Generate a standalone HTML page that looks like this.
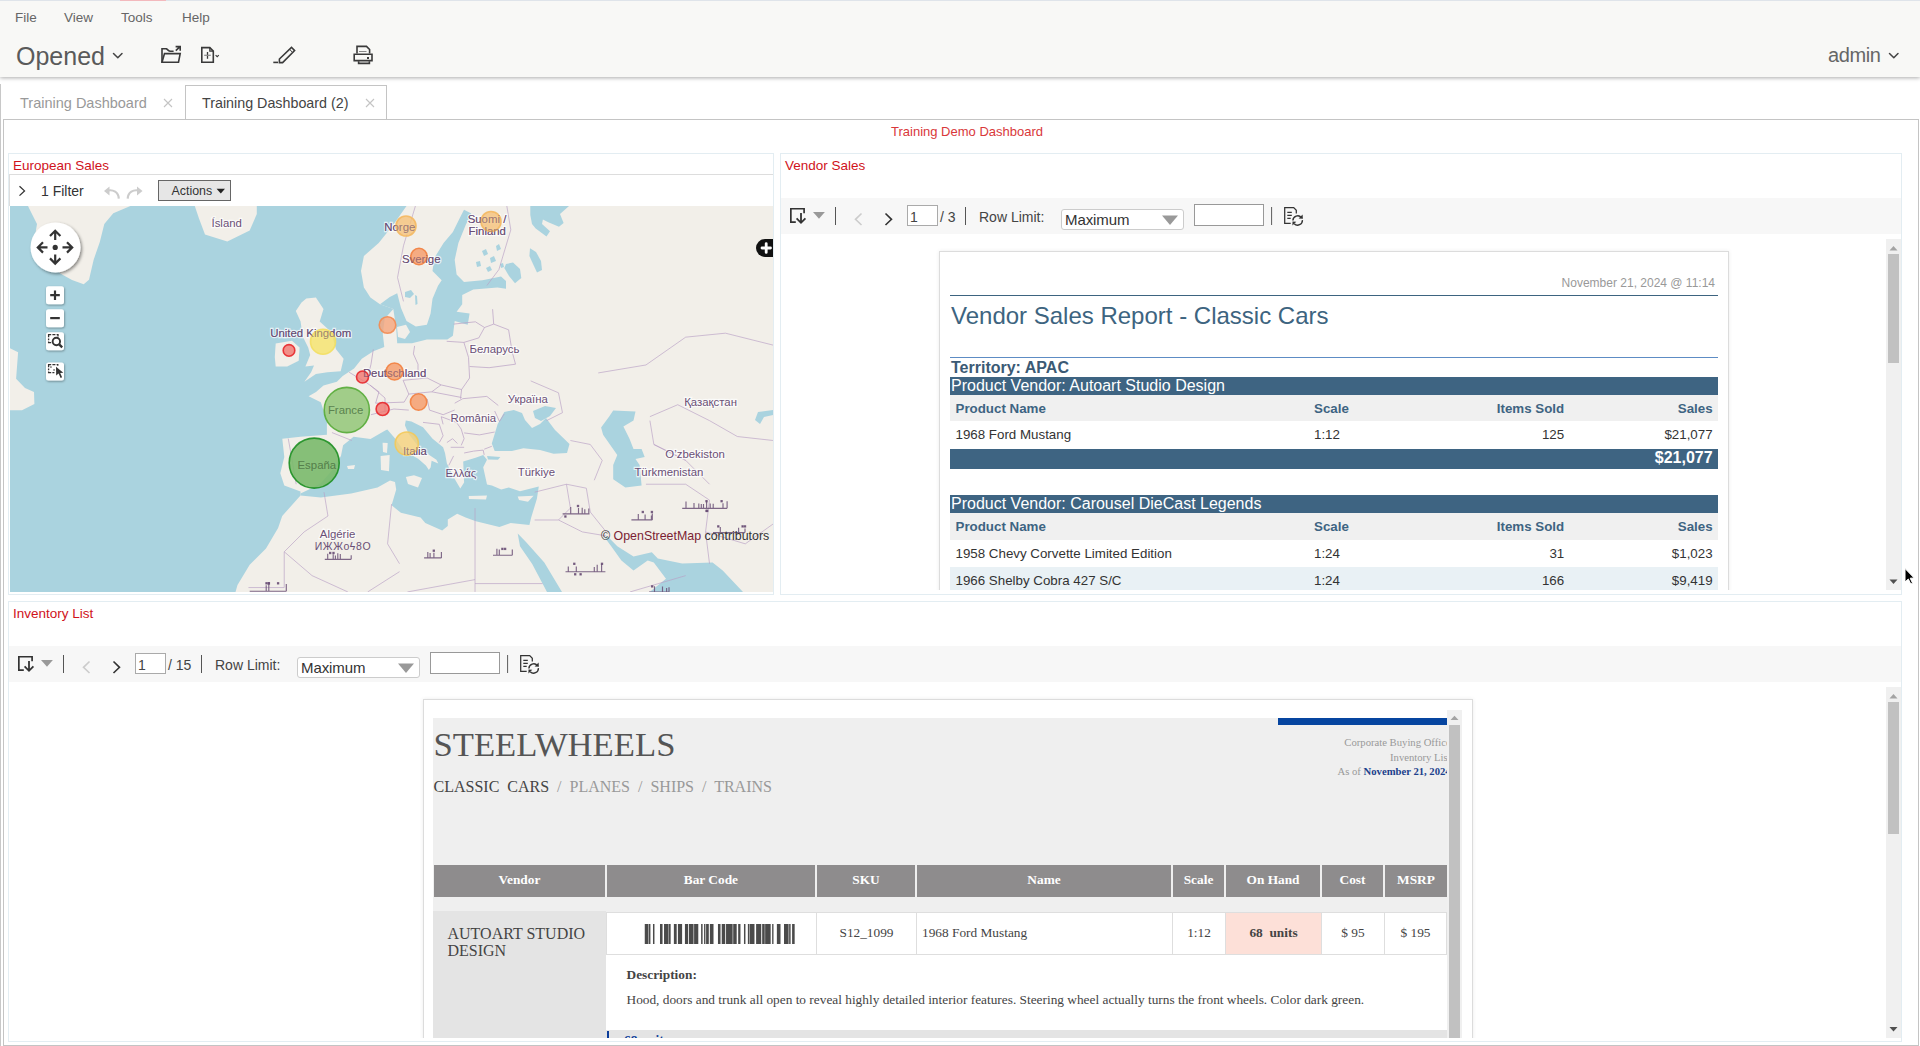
<!DOCTYPE html>
<html><head><meta charset="utf-8">
<style>
*{box-sizing:border-box}
html,body{margin:0;padding:0;width:1920px;height:1046px;overflow:hidden;background:#fff;font-family:"Liberation Sans",sans-serif;color:#333}
.a{position:absolute}
#hdr{left:0;top:0;width:1920px;height:77px;background:#f8f8f6;box-shadow:0 1px 4px rgba(0,0,0,.33)}
#topline{left:0;top:0;width:1920px;height:1px;background:#dfe4ea}
.menu{top:9.5px;font-size:13.5px;color:#666}
.tabtxt{font-size:14px;white-space:nowrap}
.panel{border:1px solid #e3edf2;background:#fff}
.ptitle{font-size:13.5px;color:#d0121b;white-space:nowrap}
.tb{background:#f7f7f7}
.sep{width:1px;height:18px;background:#666}
.pinput{border:1px solid #aaa;background:#fff}
.sel{border:1px solid #ccc;border-radius:3px;background:#fff}
.tri{width:0;height:0;border-left:8px solid transparent;border-right:8px solid transparent;border-top:10px solid #999}
.sb{background:#f0f0f0}
.thumb{background:#c1c1c1}
.serif{font-family:"Liberation Serif",serif;white-space:nowrap}
.ihdr{top:865px;height:31.9px;background:#8e8c8d;color:#fff;font-family:"Liberation Serif",serif;font-weight:bold;font-size:13.33px;line-height:13.33px;text-align:center;padding-top:7.8px;white-space:nowrap}
.icell{top:911.8px;height:43.5px;background:#fff;border:1px solid #dedede;color:#444;font-family:"Liberation Serif",serif;font-size:13.33px;line-height:13.33px;text-align:center;padding-top:12.8px;white-space:nowrap}
.tbt{font-size:14px;line-height:14px;color:#444;white-space:nowrap}
.vbar{left:950px;width:768px;height:17.8px;background:#3e6482;color:#fff;font-size:16px;line-height:16px;white-space:nowrap}
.vbar span{position:absolute;left:1px;top:1px}
.vhdr{left:950px;width:768px;height:25.5px;background:#f0f0f0;color:#3e6482;font-weight:bold;font-size:13.33px;line-height:13.33px;white-space:nowrap}
.vrow{left:950px;width:768px;height:28px;background:#fff;color:#333;font-size:13.33px;line-height:13.33px;white-space:nowrap}
.vhdr span,.vrow span{position:absolute;top:6.6px}
.vrow span{top:7.2px}
.c1{left:5.5px}.c2{left:364px}
.c3{right:153.8px;text-align:right}.c4{right:5.4px;text-align:right}
.vbar .c4{left:auto;right:5.4px}
</style></head><body>
<div id="hdr" class="a"></div>
<div id="topline" class="a"></div>
<div class="a" style="left:120px;top:0;width:46px;height:1px;background:#f3b9bd"></div>
<div class="a menu" style="left:15px">File</div>
<div class="a menu" style="left:64px">View</div>
<div class="a menu" style="left:121px">Tools</div>
<div class="a menu" style="left:182px">Help</div>
<div class="a" style="left:16px;top:42px;font-size:25px;color:#5a5a5a;white-space:nowrap">Opened</div>
<div class="a" style="left:1828px;top:44px;font-size:20px;color:#666;white-space:nowrap;letter-spacing:-0.4px">admin</div>
<svg class="a" style="left:0;top:0" width="1920" height="78" viewBox="0 0 1920 78">
 <g fill="none" stroke="#444" stroke-width="1.5" stroke-linecap="round" stroke-linejoin="round">
  <path d="M113.5 53.5 L117.8 57.8 L122 53.5"/>
  <path d="M1889.5 53.5 L1893.8 57.8 L1898 53.5"/>
 </g>
 <g fill="none" stroke="#3a3a3a" stroke-width="1.6" stroke-linejoin="miter">
  <path d="M162 62.2 V48.8 H166.3 C168 49.5 168.5 51.3 170.3 51.3 H173.6"/>
  <path d="M164.5 53.6 H180.2 L178.5 62.2 H162 Z"/>
  <path d="M175.8 50.6 L180 46.6 M175.6 46.6 H180.2 V50.8"/>
  <path d="M201.8 62.2 V47.6 H209.8 L213.3 51.1 V62.2 Z"/>
  <path d="M209.8 47.6 V51.1 H213.3" stroke-width="1.2"/>
  <path d="M207.5 52 V58.8" stroke-width="1.3"/>
  <path d="M204.2 55.3 H210.8" stroke="#888" stroke-width="1.2"/>
  <path d="M215.6 55.1 L217.2 56.7 L218.8 55.1" stroke-width="1.1"/>
  <path d="M273.3 62.4 H278"/>
  <path d="M279.4 62.6 V59 L291.5 47.3 L294.6 50.6 L282.6 62.6 Z"/>
  <path d="M289.5 49.2 L292.6 52.5" stroke-width="1"/>
  <path d="M357 53.6 V46.4 H366.5 L369.6 49.5 V53.6"/>
  <path d="M359 51.5 H366.5" stroke="#888" stroke-width="1"/>
  <path d="M354.2 54.2 H372 V60.6 H354.2 Z"/>
  <path d="M358.6 61.2 V63.4 H369.4 V61.2"/>
 </g>
 <rect x="367" y="57" width="2" height="2" fill="#3a3a3a"/>
</svg>

<!-- tabs -->
<div class="a" style="left:0;top:84px;width:1px;height:962px;background:#c8c8c8"></div>
<div class="a tabtxt" style="left:20px;top:95px;color:#999;font-size:14.5px">Training Dashboard</div>
<div class="a" style="left:185px;top:85px;width:202px;height:35px;border:1px solid #c4c4c4;border-bottom:none;background:#fff"></div>
<div class="a tabtxt" style="left:202px;top:95px;color:#444;font-size:14.3px">Training Dashboard (2)</div>
<div class="a" style="left:3px;top:119px;width:1916px;height:927px;border:1px solid #c4c4c4;border-bottom:1px solid #c4c4c4;"></div>
<div class="a" style="left:891px;top:124px;font-size:13px;color:#d9383a;white-space:nowrap">Training Demo Dashboard</div>

<!-- panel 1 -->
<div class="a panel" style="left:8px;top:153px;width:766px;height:442px"></div>
<div class="a ptitle" style="left:13px;top:158px">European Sales</div>
<div class="a" style="left:9px;top:174px;width:764px;height:1px;background:#ddd"></div><div class="a" style="left:9px;top:174px;width:1px;height:32px;background:#ddd"></div>
<div class="a" style="left:41px;top:183px;font-size:14px;color:#333">1 Filter</div>
<div class="a" style="left:158px;top:180px;width:73px;height:21px;background:#e6e6e6;border:1px solid #666"></div>
<div class="a" style="left:171.5px;top:184px;font-size:12.4px;line-height:14px;color:#333">Actions</div>
<svg class="a" style="left:10px;top:206px" width="763" height="386" viewBox="0 0 763 386">
<rect width="763" height="386" fill="#aad3df"/>
<g fill="#f2efe9">
<polygon points="396.5,0.0 763.0,0.0 763.0,386.0 225.5,386.0 227.5,379.0 239.7,358.7 256.0,342.4 268.1,322.0 272.2,310.0 290.5,289.5 290.5,285.4 274.3,279.4 270.3,267.2 274.3,251.0 272.3,232.8 290.5,230.7 316.9,228.7 316.9,214.5 310.8,196.3 298.6,190.2 306.0,186.0 313.5,179.6 326.9,175.8 332.7,170.0 344.1,162.4 351.8,152.8 363.3,145.2 374.3,141.0 372.8,128.0 374.7,112.7 383.3,103.1 370.0,98.3 360.4,91.6 355.6,84.0 353.9,81.6 351.0,65.0 353.9,50.0 368.7,37.0 383.5,18.5 396.5,0.0"/>
<polygon points="296.3,92.6 305.9,91.6 313.5,103.1 309.7,115.5 321.2,126.1 326.0,143.3 333.6,152.8 330.7,165.3 317.4,166.2 305.9,168.1 294.4,175.8 301.1,166.2 304.0,159.5 295.4,160.5 300.2,149.0 298.2,141.4 292.5,129.9 290.6,115.5 285.8,105.0 291.5,96.4"/>
<polygon points="265.7,137.5 282.0,134.7 289.6,141.4 288.7,154.7 277.2,160.5 265.7,160.5 264.8,150.9"/>
<polygon points="184.8,0.0 246.8,0.0 246.8,8.1 239.7,24.4 217.3,35.5 195.0,28.4 188.9,12.2"/>
<polygon points="18.0,0.0 120.4,0.0 103.3,7.2 94.3,18.0 89.8,36.0 83.6,53.9 79.0,73.7 73.7,78.2 62.0,74.0 50.3,67.4 35.0,50.0 25.0,30.0 27.0,18.0 20.7,5.4"/>
<polygon points="0.0,142.2 8.1,146.3 6.1,172.7 15.0,182.0 24.0,186.0 24.4,198.0 12.0,204.3 0.0,204.3"/>
</g>
<g fill="#aad3df">
<polygon points="290.5,287.5 300.0,283.0 310.8,277.3 325.0,261.1 331.0,249.7 333.1,239.2 343.6,230.8 360.5,232.9 375.2,224.5 377.3,223.4 385.3,232.7 393.9,245.1 408.2,252.7 415.9,259.4 419.7,265.2 414.0,270.9 420.7,261.3 421.6,254.7 428.3,257.5 426.4,253.7 417.8,248.0 408.2,240.3 398.7,227.9 394.9,219.3 395.8,214.5 401.5,215.5 413.0,221.2 422.6,232.7 433.1,241.3 435.0,247.0 436.9,257.5 444.6,272.8 450.3,282.4 454.1,276.6 453.2,255.6 465.6,251.8 473.2,248.9 477.0,253.7 473.2,261.3 477.0,278.6 481.9,279.6 491.2,283.4 498.8,281.5 510.0,285.2 528.8,280.6 526.9,292.8 521.2,311.5 519.4,319.0 500.6,317.1 489.4,320.9 465.9,315.2 455.6,311.5 447.2,307.7 437.8,313.4 437.8,320.0 432.2,324.6 415.3,317.1 410.6,311.5 390.9,306.8 381.6,299.3 386.2,283.4 385.0,276.0 380.0,274.5 372.0,279.0 367.5,281.4 341.2,287.5 310.8,291.5 290.5,289.5"/>
<polygon points="481.8,237.5 487.6,218.3 494.3,205.9 503.8,204.0 512.0,207.0 515.0,214.0 522.0,222.0 530.0,218.0 536.0,212.0 545.0,224.0 559.5,238.0 557.0,247.0 543.6,247.8 530.0,244.1 513.4,242.2 501.9,245.1 484.7,245.1"/>
<polygon points="477.0,249.9 490.4,251.0 488.0,253.7 478.0,253.5"/>
<polygon points="523.0,205.0 535.0,200.0 546.0,202.0 540.0,210.0 531.0,215.0 525.0,212.0"/>
<polygon points="603.2,204.4 625.5,205.4 623.5,214.5 613.4,220.6 619.5,232.8 623.5,242.9 631.6,242.9 634.7,251.0 625.5,253.0 629.6,259.1 631.6,279.4 615.4,281.4 603.2,273.3 603.2,259.1 607.3,249.0 593.1,228.7 591.1,221.6 599.2,210.5"/>
<polygon points="507.7,327.6 516.0,336.0 534.3,356.4 552.0,386.0 537.0,386.0 522.2,358.0 510.0,340.2"/>
<polygon points="597.2,330.0 607.3,340.2 623.5,350.4 641.8,346.3 647.8,352.4 672.2,357.5 702.6,356.4 712.7,364.6 733.0,386.0 639.7,386.0 656.0,372.7 643.8,356.4 637.7,354.4 623.5,364.6 611.4,354.4 601.2,340.2 595.1,332.1"/>
<polygon points="454.0,3.7 461.4,7.4 455.9,18.5 448.4,37.0 444.7,53.8 446.6,68.6 454.0,76.0 472.5,74.2 491.0,70.5 496.0,75.0 496.0,82.7 487.4,81.6 463.3,83.5 452.2,89.0 452.2,98.3 446.6,105.7 459.6,107.6 457.7,118.7 444.7,115.0 442.9,129.8 437.3,133.5 416.9,133.5 402.0,137.2 387.2,137.2 386.2,122.2 383.3,103.1 370.0,98.3 379.8,90.9 387.2,87.2 391.0,102.0 396.5,115.0 405.8,120.5 416.9,118.7 420.6,107.6 422.5,92.7 428.0,79.7 431.7,74.2 422.5,65.0 424.3,52.0 433.6,37.0 442.9,26.0 450.3,11.0"/>
<polygon points="520.3,0.0 559.0,0.0 550.0,8.1 553.6,17.1 549.0,20.7 538.3,16.2 532.9,13.5 532.0,18.0 540.0,25.2 536.5,30.5 525.7,22.5 522.0,18.0 520.3,9.0"/>
<polygon points="496.0,58.0 503.0,56.6 510.0,63.0 511.3,72.0 505.0,77.3 499.0,70.0 494.3,62.0"/>
<polygon points="520.0,42.2 526.0,46.0 531.0,55.0 532.0,64.0 527.0,66.5 523.0,58.0 519.4,50.0"/>
<polygon points="748.0,206.0 763.0,204.0 763.0,209.0 754.0,211.0 750.0,218.0 745.0,214.0"/>
<polygon points="395.0,86.0 401.0,84.0 404.0,88.0 400.0,92.0 395.0,91.0"/>
<polygon points="405.0,89.0 407.0,90.0 407.5,98.0 405.5,99.0"/>
<polygon points="472.0,45.0 476.0,43.0 478.0,48.0 474.0,50.0"/>
<polygon points="480.0,52.0 484.0,50.0 486.0,55.0 481.0,57.0"/>
<polygon points="466.0,56.0 470.0,55.0 471.0,60.0 467.0,61.0"/>
<polygon points="486.0,40.0 489.0,38.0 491.0,43.0 487.0,45.0"/>
<polygon points="476.0,62.0 480.0,60.0 482.0,64.0 478.0,66.0"/>
<polygon points="490.0,58.0 493.0,57.0 494.0,61.0 491.0,62.0"/>
</g>
<g fill="#f2efe9">
<polygon points="395.9,271.0 404.0,269.2 412.0,272.0 408.0,281.4 398.0,278.0"/>
<polygon points="370.6,250.0 379.7,249.0 379.0,265.2 371.0,264.0"/>
<polygon points="372.6,236.8 377.7,237.0 377.0,247.0 373.0,246.0"/>
<polygon points="458.7,290.0 477.0,289.5 476.0,293.6 459.0,293.0"/>
<polygon points="507.7,290.5 523.6,289.7 518.0,295.7 509.0,294.0"/>
<polygon points="337.0,260.0 345.0,259.0 344.0,263.0 338.0,263.0"/>
<polygon points="387.0,121.0 396.0,118.7 400.0,126.0 395.0,133.0 388.0,131.0"/>
</g>
</svg>
<svg class="a" style="left:10px;top:206px" width="763" height="386" viewBox="10 206 763 386">
<g fill="none" stroke="#b9a0c4" stroke-width="2.2" stroke-opacity="0.75" transform="translate(10 206) scale(0.39746)">
<polyline points="1020,0 990,100 975,180 990,240"/>
<polyline points="1250,0 1260,60 1230,160 1200,200"/>
<polyline points="1310,440 1380,470 1390,520 1350,540"/>
<polyline points="810,570 860,590"/>
<polyline points="700,585 710,640 720,700"/>
<polyline points="1410,590 1460,600 1490,640 1470,690"/>
<polyline points="1320,720 1400,700 1450,710"/>
<polyline points="1400,700 1410,760 1380,790"/>
<polyline points="1450,710 1460,770 1500,820"/>
<polyline points="1380,790 1440,820 1500,830"/>
<polyline points="1320,790 1380,790"/>
<polyline points="1170,760 1170,971"/>
<polyline points="1170,950 1340,950"/>
<polyline points="960,750 950,850 980,900"/>
<polyline points="790,720 800,780 740,820 690,870"/>
<polyline points="690,870 760,930 850,971"/>
<polyline points="900,971 980,920"/>
<polyline points="600,960 690,960 690,870"/>
<polyline points="1000,971 1170,940"/>
<polyline points="1480,420 1600,400 1700,330 1800,320 1920,350"/>
<polyline points="1610,530 1680,500 1760,540 1830,580 1920,590"/>
<polyline points="1610,540 1620,600 1700,640"/>
<polyline points="1600,700 1700,700 1760,740"/>
<polyline points="1620,600 1700,640 1760,700"/>
<polyline points="1760,740 1750,820 1850,850 1920,800"/>
<polyline points="1750,820 1760,900"/>
<polyline points="1560,971 1700,930"/>
</g>
<g fill="none" stroke="#b9a0c4" stroke-width="0.9" stroke-opacity="0.8">
<polyline points="414.6,345.9 413.4,353.9 418,364.2 418,373.4 427.2,378 441,384.9 461.6,389.5"/>
<polyline points="446.7,341.3 463.9,342.4 468.5,357.4 469.6,378 461.6,389.5 460.5,398.7"/>
<polyline points="453.6,324.1 475.4,321.8 484.5,327.5"/>
<polyline points="463.9,342.4 478.8,337.9 484.5,327.5"/>
<polyline points="484.5,327.5 493.7,324.1 492.6,309.2"/>
<polyline points="493.7,324.1 508.6,329.8 512.1,351.6 515.5,364.2"/>
<polyline points="469.6,366.5 489.1,367.7 515.5,364.2"/>
<polyline points="373.3,349.3 371,364.2 368.7,373.4 366.4,382.6 379,391.8 375.6,403.2"/>
<polyline points="349.2,372.3 366.4,382.6"/>
<polyline points="375.6,403.2 404.2,402.1 408.8,394.1 403.1,380.3 427.2,378"/>
<polyline points="408.8,394.1 431.8,391.8 441,384.9"/>
<polyline points="431.8,391.8 461.6,397.5"/>
<polyline points="427.2,399 429.5,410.1"/>
<polyline points="371,414.7 393.9,409 408.8,410.1"/>
<polyline points="454.7,403.2 462.7,398.7 486.8,396.4 498.3,405.5"/>
<polyline points="429.5,410.1 443.2,414.7 454.7,410"/>
<polyline points="423,422.4 439.3,424.3 443.1,435.8 439.3,442.5"/>
<polyline points="443.1,424.3 441.2,416.7 456.5,422.4 461.2,429.1 464.1,438.7 461.2,445.4"/>
<polyline points="464.1,432.9 479.4,434.9 494.7,432"/>
<polyline points="464.1,453 473.7,451.1 483.2,450.1 484.2,454.9"/>
<polyline points="450.7,447.3 464.1,447.3"/>
<polyline points="453.6,455.9 448.8,465.4"/>
<polyline points="446.9,442.5 452.6,438.7 457.4,443.5"/>
<polyline points="484.2,449.2 491.8,446.3"/>
<polyline points="494.7,411 499.5,421.5 504.3,413.8"/>
<polyline points="370,385 385,398 385,412"/>
</g>
<g font-family="Liberation Sans" font-size="11.4" fill="#6a4f76" stroke="#fff" stroke-width="2.4" stroke-opacity="0.7" paint-order="stroke">
<text x="211.5" y="227">Ísland</text>
<text x="384.3" y="231">Norge</text>
<text x="401.9" y="262.6">Sverige</text>
<text x="467.7" y="222.7">Suomi /</text>
<text x="468.6" y="234.7">Finland</text>
<text x="270.2" y="336.7">United Kingdom</text>
<text x="362.9" y="376.6">Deutschland</text>
<text x="469.6" y="353.4">Беларусь</text>
<text x="327.9" y="414.4">France</text>
<text x="297.5" y="469.2">España</text>
<text x="402.9" y="455">Italia</text>
<text x="450.5" y="421.5">România</text>
<text x="445.4" y="477.3">Ελλάς</text>
<text x="507.7" y="403">Україна</text>
<text x="517.7" y="475.8">Türkiye</text>
<text x="684.2" y="406">Қазақстан</text>
<text x="665.3" y="457.8">O’zbekiston</text>
<text x="634.4" y="475.8">Türkmenistan</text>
<text x="319.8" y="538.3">Algérie</text>
</g>
<g fill="#6a4f76" stroke="#6a4f76" stroke-width="1.15" stroke-opacity="0.85" fill-opacity="0.85">
<path d="M324.8 559.3 H351.2 M327.7 559.3 V553.8 M333.2 559.3 V554.2 M335.4 559.3 V555.5 M337.8 559.3 V553.3 M340.3 559.3 V553.9 M351.2 559.3 V555.3"/><rect x="332.9" y="552.4" width="1.2" height="1.2"/><rect x="329.6" y="552.4" width="1.2" height="1.2"/>
<path d="M424.1 557.9 H441.4 M427.8 557.9 V552.0 M430.1 557.9 V553.1 M433.9 557.9 V552.8 M441.4 557.9 V551.9"/><rect x="433.2" y="550.1" width="1.2" height="1.2"/>
<path d="M493.0 555.2 H512.3 M496.9 555.2 V548.8 M499.3 555.2 V549.4 M512.3 555.2 V549.6"/><rect x="504.5" y="548.3" width="1.2" height="1.2"/><rect x="501.8" y="548.3" width="1.2" height="1.2"/>
<path d="M562.6 513.9 H589.5 M570.7 513.9 V506.9 M578.5 513.9 V508.0 M582.2 513.9 V507.8 M584.8 513.9 V509.2 M588.8 513.9 V508.5"/><rect x="564.8" y="515.9" width="1.2" height="1.2"/><rect x="577.4" y="505.4" width="1.2" height="1.2"/>
<path d="M631.4 519.9 H652.3 M638.3 519.9 V514.1 M645.1 519.9 V514.6 M651.4 519.9 V515.4 M652.3 519.9 V513.4"/><rect x="651.3" y="511.4" width="1.2" height="1.2"/><rect x="642.2" y="511.4" width="1.2" height="1.2"/>
<path d="M682.2 508.3 H727.1 M686.0 508.3 V501.4 M694.0 508.3 V503.0 M698.8 508.3 V503.6 M701.3 508.3 V504.1 M703.5 508.3 V503.9 M706.6 508.3 V501.5 M710.2 508.3 V503.4 M713.2 508.3 V503.8 M723.0 508.3 V503.2 M727.1 508.3 V501.2"/><rect x="705.9" y="510.3" width="1.2" height="1.2"/><rect x="706.6" y="510.3" width="1.2" height="1.2"/><rect x="705.9" y="500.6" width="1.2" height="1.2"/><rect x="721.0" y="500.6" width="1.2" height="1.2"/>
<path d="M565.5 571.7 H605.4 M568.3 571.7 V566.6 M576.3 571.7 V566.4 M594.3 571.7 V567.1 M597.2 571.7 V564.8 M601.6 571.7 V563.9"/><rect x="580.0" y="573.7" width="1.2" height="1.2"/><rect x="574.6" y="573.7" width="1.2" height="1.2"/><rect x="573.7" y="563.2" width="1.2" height="1.2"/><rect x="601.4" y="563.2" width="1.2" height="1.2"/>
<path d="M713.0 532.6 H745.0 M720.3 532.6 V527.1 M738.6 532.6 V527.8 M745.0 532.6 V528.5"/><rect x="742.0" y="525.8" width="1.2" height="1.2"/><rect x="717.7" y="525.8" width="1.2" height="1.2"/><rect x="744.4" y="525.8" width="1.2" height="1.2"/>
<path d="M649.0 592.1 H669.0 M654.5 592.1 V586.2 M662.5 592.1 V586.5 M666.6 592.1 V588.1 M669.0 592.1 V587.2"/><rect x="654.2" y="594.1" width="1.2" height="1.2"/><rect x="651.6" y="585.8" width="1.2" height="1.2"/>
<path d="M249.7 591.2 H286.3 M266.2 591.2 V585.2 M268.8 591.2 V583.9 M286.3 591.2 V584.0"/><rect x="268.3" y="582.7" width="1.2" height="1.2"/><rect x="277.5" y="582.7" width="1.2" height="1.2"/><rect x="265.9" y="582.7" width="1.2" height="1.2"/><rect x="268.2" y="582.7" width="1.2" height="1.2"/>
</g>
<text x="314.7" y="549.5" font-family="Liberation Sans" font-size="10.5" fill="#6a4f76" letter-spacing="0.6">ИЖЖoϟ8O</text>
<circle cx="289" cy="350.4" r="5.8" fill="#f0776f" fill-opacity="0.8" stroke="#e8262a" stroke-width="1.6" stroke-opacity="0.9"/>
<circle cx="323" cy="341.7" r="12.5" fill="#f5e36a" fill-opacity="0.8" stroke="#f3df62" stroke-width="1.6" stroke-opacity="0.9"/>
<circle cx="387.5" cy="325" r="8.3" fill="#f5a57c" fill-opacity="0.8" stroke="#f28b52" stroke-width="1.6" stroke-opacity="0.9"/>
<circle cx="362.5" cy="377" r="6" fill="#f0776f" fill-opacity="0.8" stroke="#e8262a" stroke-width="1.6" stroke-opacity="0.9"/>
<circle cx="394.5" cy="371.5" r="8.5" fill="#f59a68" fill-opacity="0.8" stroke="#f2803f" stroke-width="1.6" stroke-opacity="0.9"/>
<circle cx="346.8" cy="410" r="22.6" fill="#98c97e" fill-opacity="0.9" stroke="#56ab37" stroke-width="1.6" stroke-opacity="0.9"/>
<circle cx="314.2" cy="463.1" r="25" fill="#7ab96b" fill-opacity="0.9" stroke="#1d8f22" stroke-width="1.6" stroke-opacity="0.9"/>
<circle cx="382.6" cy="409" r="6.5" fill="#f0776f" fill-opacity="0.8" stroke="#e8262a" stroke-width="1.6" stroke-opacity="0.9"/>
<circle cx="418.6" cy="402" r="8.2" fill="#f59a68" fill-opacity="0.8" stroke="#f2803f" stroke-width="1.6" stroke-opacity="0.9"/>
<circle cx="406.8" cy="443.6" r="11.6" fill="#f5d27c" fill-opacity="0.8" stroke="#f3c95a" stroke-width="1.6" stroke-opacity="0.9"/>
<circle cx="406" cy="226" r="10" fill="#f5c27a" fill-opacity="0.8" stroke="#f4b860" stroke-width="1.6" stroke-opacity="0.9"/>
<circle cx="419" cy="256.5" r="8.2" fill="#f59a68" fill-opacity="0.8" stroke="#f2803f" stroke-width="1.6" stroke-opacity="0.9"/>
<circle cx="491" cy="221.5" r="10" fill="#f5c27a" fill-opacity="0.8" stroke="#f4b860" stroke-width="1.6" stroke-opacity="0.9"/>
<g font-family="Liberation Sans" font-size="11.4" fill="#6a4f76" fill-opacity="0.55">
<text x="384.3" y="231">Norge</text>
<text x="401.9" y="262.6">Sverige</text>
<text x="467.7" y="222.7">Suomi /</text>
<text x="468.6" y="234.7">Finland</text>
<text x="270.2" y="336.7">United Kingdom</text>
<text x="362.9" y="376.6">Deutschland</text>
<text x="402.9" y="455">Italia</text>
</g>
<g font-family="Liberation Sans" font-size="11.4" fill="#4a7040" fill-opacity="0.75"><text x="327.9" y="414.4">France</text><text x="297.5" y="469.2">España</text></g>
<text x="601" y="539.5" font-family="Liberation Sans" font-size="12.4" fill="#333">© <tspan fill="#7b1e33">OpenStreetMap</tspan> contributors</text>
<defs><filter id="sh" x="-30%" y="-30%" width="160%" height="160%"><feDropShadow dx="1.5" dy="1.5" stdDeviation="1.5" flood-color="#000" flood-opacity="0.45"/></filter><filter id="sh2" x="-30%" y="-30%" width="160%" height="160%"><feDropShadow dx="0.5" dy="1" stdDeviation="0.8" flood-color="#000" flood-opacity="0.4"/></filter></defs>
<circle cx="55.5" cy="247.4" r="25" fill="#fff" filter="url(#sh)"/>
<g fill="none" stroke="#333" stroke-width="2.2" stroke-linejoin="miter"><path d="M55.2 240 V231.5 M50 236 L55.2 230.8 L60.4 236"/><path d="M55.2 254.6 V262.8 M50 258.4 L55.2 263.6 L60.4 258.4"/><path d="M47.5 247.4 H38.8 M43 242.2 L37.8 247.4 L43 252.6"/><path d="M62.5 247.4 H71.2 M67 242.2 L72.2 247.4 L67 252.6"/></g><circle cx="55.2" cy="247.4" r="2.6" fill="#333"/>
<rect x="46" y="286.2" width="18" height="18" rx="2.5" fill="#fff" filter="url(#sh2)"/>
<rect x="46" y="309.3" width="18" height="18" rx="2.5" fill="#fff" filter="url(#sh2)"/>
<rect x="46" y="332.2" width="18" height="18" rx="2.5" fill="#fff" filter="url(#sh2)"/>
<rect x="46" y="362.4" width="18" height="18" rx="2.5" fill="#fff" filter="url(#sh2)"/>
<path d="M50.2 295.2 H59.8 M55 290.4 V300" stroke="#333" stroke-width="2.2"/>
<path d="M50.2 318.1 H59.8" stroke="#333" stroke-width="2.2"/>
<g fill="none" stroke="#333" stroke-width="1.3"><path d="M48.6 337.2 V334.6 H51.2 M52.4 334.6 H55.4 M56.6 334.6 H58 V336.4 M48.6 338.4 V340.2 M48.6 341.4 V342.6 H51.2"/><circle cx="56.35" cy="341.5" r="3.7" stroke-width="1.9"/><path d="M59.2 344.4 L62.2 347.4" stroke-width="2.3"/></g>
<g fill="none" stroke="#333" stroke-width="1.3"><path d="M48.6 367.2 V364.6 H51.2 M52.4 364.6 H55.4 M56.6 364.6 H57.8 V365.8 M48.6 368.4 V370.2 M48.6 371.4 V372.6 H51.2 M52.4 372.6 H54.4"/></g><rect x="50.3" y="366.4" width="1.3" height="1.3" fill="#333"/><rect x="53.4" y="369.3" width="1.3" height="1.3" fill="#333"/>
<path d="M56 366.8 L56.2 375.6 L58.6 373.5 L60.6 378 L62.1 377.3 L60.2 372.9 L63.3 372.7 Z" fill="#333"/>
<rect x="756" y="239" width="26" height="18" rx="9" fill="#111"/><path d="M762 248 H770.5 M766.2 243.6 V252.4" stroke="#fff" stroke-width="2.8" stroke-linecap="round"/>
</svg>

<!-- panel 2 -->
<div class="a panel" style="left:780px;top:153px;width:1122px;height:442px"></div>
<div class="a ptitle" style="left:785px;top:158px">Vendor Sales</div>
<div class="a tb" style="left:781px;top:198px;width:1120px;height:36px"></div>
<svg class="a" style="left:780px;top:198px" width="540" height="36" viewBox="0 0 540 36">
<g fill="none" stroke="#333" stroke-width="1.7"><path d="M24.1 15.2 V10.75 H10.85 V24.05 H15.8"/><path d="M21 15 V24.6 M16.6 20.4 L21 24.8 L25.4 20.4" stroke-width="1.8"/></g>
<path d="M33 13.9 H44.9 L39 20.8 Z" fill="#999"/>
<rect x="55" y="9" width="1" height="18" fill="#555"/>
<path d="M81.5 15.5 L75.5 21.3 L81.5 27" fill="none" stroke="#ccc" stroke-width="1.6"/>
<path d="M105.5 15.5 L111.5 21.3 L105.5 27" fill="none" stroke="#333" stroke-width="1.6"/>
<rect x="185" y="9" width="1" height="18" fill="#555"/>
<rect x="491" y="9" width="1.1" height="18" fill="#6a6a6a"/>
<g transform="translate(503 0)"><g fill="none" stroke="#333" stroke-width="1.25"><path d="M7.7 25.4 H1.7 V9.6 H10.7 L13.3 12.3 V15.6"/><path d="M4.3 14.4 H8.8 M4.3 17.45 H8.8 M4.3 20.35 H7.7" stroke-width="1.3"/><path d="M9.9 22.6 A4.8 4.8 0 0 1 18.4 19.6 M19.4 22.1 A4.8 4.8 0 0 1 11.2 25.7" stroke-width="1.4"/></g><path d="M15.6 20.4 L19.6 16.6 L19.9 20.8 Z M9.4 27.6 L9.5 23.6 L13.3 23.8 Z" fill="#333"/></g>
</svg>
<div class="a pinput" style="left:907px;top:205px;width:31px;height:21px"></div>
<div class="a tbt" style="left:910px;top:210px">1</div>
<div class="a tbt" style="left:940px;top:210px">/ 3</div>
<div class="a tbt" style="left:979px;top:210px">Row Limit:</div>
<div class="a sel" style="left:1061px;top:209px;width:123px;height:21px"></div>
<div class="a" style="left:1065px;top:211.5px;font-size:15px;line-height:15px;color:#333;letter-spacing:-0.1px">Maximum</div>
<svg class="a" style="left:1160px;top:213px" width="20" height="14"><path d="M2 2.4 H18 L10 12 Z" fill="#999"/></svg>
<div class="a pinput" style="left:1194px;top:204px;width:70px;height:22px;border-color:#999"></div>
<!-- vendor report viewport -->
<div class="a" style="left:781px;top:234px;width:1105px;height:356px;overflow:hidden;background:#fff">
 <div class="a" style="left:-781px;top:-234px;width:1920px;height:1046px">
  <div class="a" style="left:939px;top:251px;width:790px;height:420px;border:1px solid #dcdcdc;box-shadow:0 0 4px rgba(0,0,0,.08)"></div>
  <div class="a" style="left:1500px;top:277.2px;width:215px;text-align:right;font-size:12px;line-height:12px;color:#999">November 21, 2024 @ 11:14</div>
  <div class="a" style="left:950px;top:295px;width:768px;height:1px;background:#3d6480"></div>
  <div class="a" style="left:951px;top:303.5px;font-size:24px;line-height:24px;color:#3d6480;white-space:nowrap">Vendor Sales Report - Classic Cars</div>
  <div class="a" style="left:950px;top:357px;width:768px;height:1px;background:#5d8cc4"></div>
  <div class="a" style="left:951px;top:360.3px;font-size:16px;line-height:16px;font-weight:bold;color:#3b5a75;white-space:nowrap">Territory: APAC</div>
  <div class="a vbar" style="top:377px"><span style="top:1.2px">Product Vendor: Autoart Studio Design</span></div>
  <div class="a vhdr" style="top:395px"><span class="c1">Product Name</span><span class="c2">Scale</span><span class="c3">Items Sold</span><span class="c4">Sales</span></div>
  <div class="a vrow" style="top:420.5px"><span class="c1">1968 Ford Mustang</span><span class="c2">1:12</span><span class="c3">125</span><span class="c4">$21,077</span></div>
  <div class="a vbar" style="top:448.5px;height:20.3px"><span class="c4" style="font-weight:bold;top:1.5px">$21,077</span></div>
  <div class="a vbar" style="top:495px"><span>Product Vendor: Carousel DieCast Legends</span></div>
  <div class="a vhdr" style="top:513px;height:27px"><span class="c1">Product Name</span><span class="c2">Scale</span><span class="c3">Items Sold</span><span class="c4">Sales</span></div>
  <div class="a vrow" style="top:540px"><span class="c1">1958 Chevy Corvette Limited Edition</span><span class="c2">1:24</span><span class="c3">31</span><span class="c4">$1,023</span></div>
  <div class="a vrow" style="top:567.3px;background:#e9f1f5"><span class="c1">1966 Shelby Cobra 427 S/C</span><span class="c2">1:24</span><span class="c3">166</span><span class="c4">$9,419</span></div>
 </div>
</div>
<div class="a sb" style="left:1886px;top:239px;width:15px;height:351px"></div>
<div class="a thumb" style="left:1888px;top:254px;width:11px;height:109px"></div>
<svg class="a" style="left:1886px;top:239px" width="15" height="351"><path d="M3.5 11.5 H11.5 L7.5 7 Z" fill="#a3a3a3"/><path d="M3.5 340.5 H11.5 L7.5 345 Z" fill="#505050"/></svg>

<!-- panel 3 -->
<div class="a panel" style="left:8px;top:601px;width:1894px;height:441px"></div>
<div class="a ptitle" style="left:13px;top:606px">Inventory List</div>
<div class="a tb" style="left:9px;top:646px;width:1892px;height:36px"></div>
<svg class="a" style="left:8px;top:646px" width="540" height="36" viewBox="0 0 540 36">
<g fill="none" stroke="#333" stroke-width="1.7"><path d="M24.1 15.2 V10.75 H10.85 V24.05 H15.8"/><path d="M21 15 V24.6 M16.6 20.4 L21 24.8 L25.4 20.4" stroke-width="1.8"/></g>
<path d="M33 13.9 H44.9 L39 20.8 Z" fill="#999"/>
<rect x="55" y="9" width="1" height="18" fill="#555"/>
<path d="M81.5 15.5 L75.5 21.3 L81.5 27" fill="none" stroke="#ccc" stroke-width="1.6"/>
<path d="M105.5 15.5 L111.5 21.3 L105.5 27" fill="none" stroke="#333" stroke-width="1.6"/>
<rect x="193" y="9" width="1" height="18" fill="#555"/>
<rect x="499" y="9" width="1.1" height="18" fill="#6a6a6a"/>
<g transform="translate(511 0)"><g fill="none" stroke="#333" stroke-width="1.25"><path d="M7.7 25.4 H1.7 V9.6 H10.7 L13.3 12.3 V15.6"/><path d="M4.3 14.4 H8.8 M4.3 17.45 H8.8 M4.3 20.35 H7.7" stroke-width="1.3"/><path d="M9.9 22.6 A4.8 4.8 0 0 1 18.4 19.6 M19.4 22.1 A4.8 4.8 0 0 1 11.2 25.7" stroke-width="1.4"/></g><path d="M15.6 20.4 L19.6 16.6 L19.9 20.8 Z M9.4 27.6 L9.5 23.6 L13.3 23.8 Z" fill="#333"/></g>
</svg>
<div class="a pinput" style="left:135px;top:653px;width:31px;height:21px"></div>
<div class="a tbt" style="left:138px;top:658px">1</div>
<div class="a tbt" style="left:168px;top:658px">/ 15</div>
<div class="a tbt" style="left:215px;top:658px">Row Limit:</div>
<div class="a sel" style="left:297px;top:657px;width:123px;height:21px"></div>
<div class="a" style="left:301px;top:659.5px;font-size:15px;line-height:15px;color:#333;letter-spacing:-0.1px">Maximum</div>
<svg class="a" style="left:396px;top:661px" width="20" height="14"><path d="M2 2.4 H18 L10 12 Z" fill="#999"/></svg>
<div class="a pinput" style="left:430px;top:652px;width:70px;height:22px;border-color:#999"></div>
<!-- inventory viewport -->
<div class="a" style="left:9px;top:682px;width:1877px;height:355.6px;overflow:hidden;background:#fff">
 <div class="a" style="left:-9px;top:-682px;width:1920px;height:1046px">
  <div class="a" style="left:422.5px;top:699.4px;width:1050px;height:400px;border:1px solid #dcdcdc;box-shadow:0 0 4px rgba(0,0,0,.08)"></div>
  <div class="a" style="left:433.4px;top:717.8px;width:1013.6px;height:400px;background:#efefef"></div>
  <div class="a" style="left:1278px;top:717.8px;width:169px;height:7.2px;background:#0645a0"></div>
  <div class="a serif" style="left:433.5px;top:727px;font-size:34.67px;line-height:34.67px;color:#555">STEELWHEELS</div>
  <div class="a serif" style="left:433.5px;top:778.9px;font-size:16px;line-height:16px;color:#999;white-space:pre"><span style="color:#444">CLASSIC  CARS</span>  /  PLANES  /  SHIPS  /  TRAINS</div>
  <div class="a" style="left:1200px;top:730px;width:247px;height:60px;overflow:hidden">
   <div class="a serif" style="right:-3.7px;top:4.6px;text-align:right;font-size:10.67px;line-height:14.9px;color:#999;white-space:nowrap">Corporate Buying Office<br>Inventory List<br>As of <b style="color:#1c3f8c">November 21, 2024</b></div>
  </div>
  <div class="a ihdr" style="left:434px;width:170.9px">Vendor</div>
  <div class="a ihdr" style="left:606.8px;width:208.2px">Bar Code</div>
  <div class="a ihdr" style="left:817px;width:98px">SKU</div>
  <div class="a ihdr" style="left:917px;width:254px">Name</div>
  <div class="a ihdr" style="left:1173px;width:51px">Scale</div>
  <div class="a ihdr" style="left:1226px;width:94px">On Hand</div>
  <div class="a ihdr" style="left:1322px;width:61px">Cost</div>
  <div class="a ihdr" style="left:1385px;width:62px">MSRP</div>
  <div class="a" style="left:433.4px;top:911px;width:172.4px;height:200px;background:#e4e4e4"></div>
  <div class="a serif" style="left:447.5px;top:924.7px;font-size:16px;line-height:17.8px;color:#444">AUTOART STUDIO<br>DESIGN</div>
  <div class="a icell" style="left:605.8px;width:211px"></div>
  <div class="a icell" style="left:816px;width:101px">S12_1099</div>
  <div class="a icell" style="left:916px;width:257px;text-align:left;padding-left:5px">1968 Ford Mustang</div>
  <div class="a icell" style="left:1172px;width:54px">1:12</div>
  <div class="a icell" style="left:1225px;width:97px;background:#fde0d8;font-weight:bold">68&nbsp; units</div>
  <div class="a icell" style="left:1321px;width:64px">$ 95</div>
  <div class="a icell" style="left:1384px;width:63px">$ 195</div>
  <svg class="a" style="left:640px;top:920px" width="160" height="30" viewBox="640 920 160 30"><g fill="#4a4a4a"><rect x="644.76" y="924" width="3.64" height="20"/><rect x="648.80" y="924" width="1.62" height="20"/><rect x="652.98" y="924" width="1.48" height="20"/><rect x="659.99" y="924" width="2.56" height="20"/><rect x="664.03" y="924" width="4.58" height="20"/><rect x="669.02" y="924" width="1.62" height="20"/><rect x="673.87" y="924" width="2.83" height="20"/><rect x="677.92" y="924" width="4.18" height="20"/><rect x="684.93" y="924" width="3.24" height="20"/><rect x="688.97" y="924" width="4.58" height="20"/><rect x="694.10" y="924" width="4.18" height="20"/><rect x="701.11" y="924" width="1.48" height="20"/><rect x="704.07" y="924" width="1.35" height="20"/><rect x="706.09" y="924" width="2.70" height="20"/><rect x="709.87" y="924" width="3.64" height="20"/><rect x="717.96" y="924" width="2.56" height="20"/><rect x="721.73" y="924" width="3.50" height="20"/><rect x="726.04" y="924" width="6.61" height="20"/><rect x="733.19" y="924" width="3.50" height="20"/><rect x="738.18" y="924" width="2.29" height="20"/><rect x="743.97" y="924" width="1.48" height="20"/><rect x="747.88" y="924" width="1.62" height="20"/><rect x="749.91" y="924" width="4.58" height="20"/><rect x="756.11" y="924" width="5.12" height="20"/><rect x="762.17" y="924" width="2.56" height="20"/><rect x="765.14" y="924" width="5.53" height="20"/><rect x="772.15" y="924" width="1.35" height="20"/><rect x="776.87" y="924" width="3.64" height="20"/><rect x="784.01" y="924" width="4.58" height="20"/><rect x="789.13" y="924" width="1.48" height="20"/><rect x="792.10" y="924" width="2.56" height="20"/></g></svg>
  <div class="a" style="left:605.8px;top:955.3px;width:841.2px;height:74.8px;background:#fff"></div>
  <div class="a serif" style="left:626.5px;top:967.7px;font-size:13.33px;line-height:13.33px;color:#444;font-weight:bold">Description:</div>
  <div class="a serif" style="left:626.5px;top:992.8px;font-size:13.33px;line-height:13.33px;color:#444;white-space:nowrap">Hood, doors and trunk all open to reveal highly detailed interior features. Steering wheel actually turns the front wheels. Color dark green.</div>
  <div class="a" style="left:605.8px;top:1030.1px;width:841.2px;height:30px;background:#e4e4e4"></div>
  <div class="a" style="left:607.4px;top:1031px;width:2px;height:30px;background:#0b3d9a"></div>
  <div class="a serif" style="left:624px;top:1033px;font-size:13.33px;line-height:13.33px;color:#0b3d9a;font-weight:bold">68 units</div>
  <div class="a sb" style="left:1447px;top:710px;width:15px;height:400px"></div>
  <div class="a thumb" style="left:1449px;top:725px;width:11px;height:400px"></div>
  <svg class="a" style="left:1447px;top:710px" width="15" height="15"><path d="M3.5 10 H11.5 L7.5 5.8 Z" fill="#a3a3a3"/></svg>
 </div>
</div>
<div class="a sb" style="left:1886px;top:687px;width:15px;height:350.6px"></div>
<div class="a thumb" style="left:1888px;top:702px;width:11px;height:132px"></div>
<svg class="a" style="left:1886px;top:687px" width="15" height="351"><path d="M3.5 11.5 H11.5 L7.5 7 Z" fill="#a3a3a3"/><path d="M3.5 340 H11.5 L7.5 344.5 Z" fill="#505050"/></svg>

<svg class="a" style="left:1900px;top:565px" width="20" height="22" viewBox="1900 565 20 22"><path d="M1905 568.5 V582 L1908.3 579 L1910.8 584 L1912.6 583.2 L1910.2 578.2 L1914.2 578 Z" fill="#000" stroke="#fff" stroke-width="1" stroke-linejoin="round"/></svg>
<svg class="a" style="left:0;top:80px" width="400" height="40" viewBox="0 80 400 40"><g stroke="#c4c4c4" stroke-width="1.1"><path d="M164 99 L172 107 M172 99 L164 107"/><path d="M366 99 L374 107 M374 99 L366 107"/></g></svg>
<svg class="a" style="left:10px;top:176px" width="230" height="30" viewBox="10 176 230 30">
 <path d="M19.5 186.2 L24.5 190.9 L19.5 195.6" fill="none" stroke="#333" stroke-width="1.3"/>
 <g fill="none" stroke="#ccc" stroke-width="2.2"><path d="M108 190.5 C113 189.5 118.5 192 118.8 198.6"/><path d="M138.5 190.5 C133.5 189.5 128 192 127.7 198.6"/></g>
 <path d="M104 191 L109.5 186.5 L109.5 195.5 Z M142.5 191 L137 186.5 L137 195.5 Z" fill="#ccc"/>
 <path d="M216.6 188.8 H225 L220.8 193.4 Z" fill="#222"/>
</svg>
</body></html>
